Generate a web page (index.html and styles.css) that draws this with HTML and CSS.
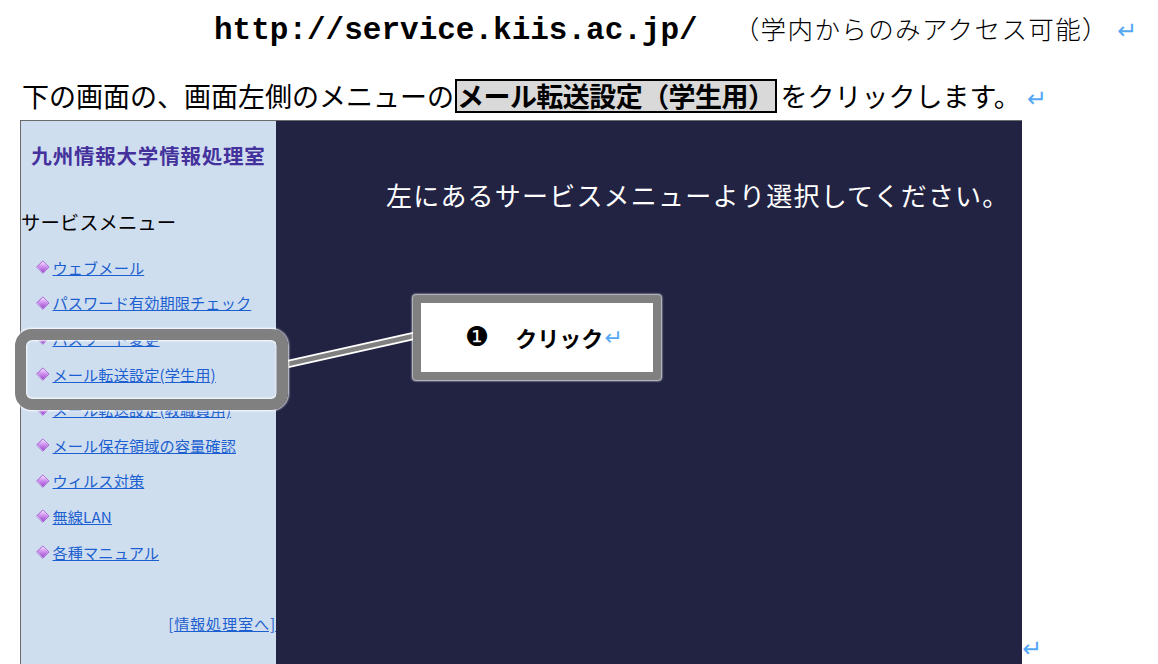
FILE: index.html
```html
<!DOCTYPE html>
<html lang="ja">
<head>
<meta charset="utf-8">
<title>メール転送設定</title>
<link rel="stylesheet" href="styles.css">
</head>
<body>
<div class="page">
  <div class="line1"><span class="url">http://service.kiis.ac.jp/</span><span class="note">（学内からのみアクセス可能）</span><span class="ret r1">↵</span></div>
  <div class="line2"><span>下の画面の、画面左側のメニューの</span><span class="hl">メール転送設定（学生用）</span><span>をクリックします。</span><span class="ret r2">↵</span></div>
  <div class="shotrow">
    <div class="shot">
      <div class="side">
        <div class="org">九州情報大学情報処理室</div>
        <div class="menuhead">サービスメニュー</div>
        <ul class="menu">
          <li><span class="dia"></span><a href="#">ウェブメール</a></li>
          <li><span class="dia"></span><a href="#">パスワード有効期限チェック</a></li>
          <li><span class="dia"></span><a href="#">パスワード変更</a></li>
          <li><span class="dia"></span><a href="#">メール転送設定(学生用)</a></li>
          <li><span class="dia"></span><a href="#">メール転送設定(教職員用)</a></li>
          <li><span class="dia"></span><a href="#">メール保存領域の容量確認</a></li>
          <li><span class="dia"></span><a href="#">ウィルス対策</a></li>
          <li><span class="dia"></span><a href="#">無線LAN</a></li>
          <li><span class="dia"></span><a href="#">各種マニュアル</a></li>
        </ul>
        <div class="back"><a href="#">[情報処理室へ]</a></div>
      </div>
      <div class="main">
        <div class="msg">左にあるサービスメニューより選択してください。</div>
      </div>
    </div>
    <span class="ret r3">↵</span>
  </div>

  <svg class="connector" width="145" height="60" viewBox="0 0 145 60">
    <line x1="8" y1="44" x2="138" y2="15" stroke="#ffffff" stroke-width="8" stroke-linecap="butt"/>
    <line x1="8" y1="44" x2="138" y2="15" stroke="#808080" stroke-width="4.5" stroke-linecap="butt"/>
  </svg>
  <div class="ring"></div>
  <div class="callout"><span class="num">❶</span><span class="click">クリック</span><span class="ret r4">↵</span></div>
</div>
</body>
</html>
```
FILE: styles.css
```css
html, body {
  margin: 0;
  padding: 0;
  background: #ffffff;
}
body {
  font-family: "Noto Sans CJK JP", "Noto Sans", sans-serif;
  color: #000;
  overflow: hidden;
}
.page {
  position: relative;
  width: 1158px;
  height: 664px;
}
.line1 {
  height: 56px;
  line-height: 56px;
  padding-left: 214px;
  margin-bottom: 15px;
  white-space: nowrap;
  font-size: 25.5px;
}
.url {
  font-family: "Liberation Mono", monospace;
  font-weight: bold;
  font-size: 31px;
  margin-right: 36px;
}
.note {
  font-family: "Liberation Serif", "Noto Sans CJK JP", serif;
  font-weight: 300;
  font-size: 25.5px;
  letter-spacing: 1.4px;
}
.ret {
  font-family: "DejaVu Sans", sans-serif;
  color: #55a8f5;
  font-size: 24px;
  letter-spacing: 0;
}
.r1 {
  margin-left: 8px;
}
.line2 {
  height: 49px;
  line-height: 49px;
  padding-left: 22px;
  white-space: nowrap;
  font-size: 27px;
}
.hl {
  display: inline-block;
  border: 2px solid #000;
  background: #d9d9d9;
  font-weight: bold;
  line-height: 30px;
  letter-spacing: -0.55px;
  padding: 0 1px 0 0;
  margin: 0 3px 0 1px;
}
.r2 {
  margin-left: 6px;
}
.shotrow {
  display: flex;
  align-items: flex-end;
}
.shot {
  display: flex;
  margin-left: 20px;
  width: 1002px;
  height: 544px;
  box-sizing: border-box;
  border-top: 1px solid #6b6b6b;
  border-left: 1px solid #6b6b6b;
}
.r3 {
  line-height: 20px;
  margin-bottom: 5px;
}
.side {
  width: 255px;
  flex: none;
  background: #cfdeef;
  display: flex;
  flex-direction: column;
}
.org {
  margin-top: 22px;
  line-height: 24px;
  text-align: center;
  color: #45319c;
  font-weight: bold;
  font-size: 20.5px;
  letter-spacing: 0.8px;
}
.menuhead {
  margin-top: 43px;
  line-height: 24px;
  font-size: 19.4px;
  color: #000;
}
.menu {
  list-style: none;
  margin: 15px 0 0 0;
  padding: 0 0 0 16px;
}
.menu li {
  height: 35.6px;
  display: flex;
  align-items: center;
}
.dia {
  width: 7.5px;
  height: 7.5px;
  margin: 0 6px 0 2px;
  transform: rotate(45deg);
  background: linear-gradient(135deg, #f6e2ff 0%, #cf92ee 45%, #9a46cc 100%);
  box-shadow: 0 0 0 0.7px #a65ad6;
  flex: none;
}
.menu a, .back a {
  color: #1c5fd0;
  text-decoration: underline;
  font-size: 15.2px;
  line-height: 20px;
  letter-spacing: 0.1px;
}
.back {
  margin-top: 44px;
  line-height: 20px;
  text-align: right;
}
.back a {
  letter-spacing: 0.8px;
}
.main {
  flex: 1;
  background: #222342;
}
.msg {
  padding: 56px 0 0 110px;
  line-height: 36px;
  font-size: 26px;
  letter-spacing: 1.2px;
  color: #ffffff;
  white-space: nowrap;
}
.connector {
  position: absolute;
  left: 280px;
  top: 320px;
}
.ring {
  position: absolute;
  left: 15px;
  top: 329px;
  width: 273px;
  height: 81px;
  box-sizing: border-box;
  border: 11px solid #808080;
  border-radius: 17px;
  box-shadow: 0 0 2px 1px rgba(255,255,255,0.9), inset 0 0 2px 1px rgba(255,255,255,0.9);
}
.callout {
  position: absolute;
  left: 413px;
  top: 295px;
  width: 248px;
  height: 85px;
  box-sizing: border-box;
  border: 8px solid #808080;
  border-radius: 3px;
  background: #ffffff;
  box-shadow: 0 0 2px 1px rgba(255,255,255,0.9);
  display: flex;
  align-items: center;
  padding-left: 44px;
  padding-bottom: 1px;
}
.num {
  font-family: "DejaVu Sans", sans-serif;
  font-size: 27px;
  line-height: 30px;
  color: #000;
  margin-right: 26px;
}
.click {
  font-weight: bold;
  font-size: 22px;
  color: #000;
}
.r4 {
  margin-left: 1px;
  font-size: 22px;
}
```
